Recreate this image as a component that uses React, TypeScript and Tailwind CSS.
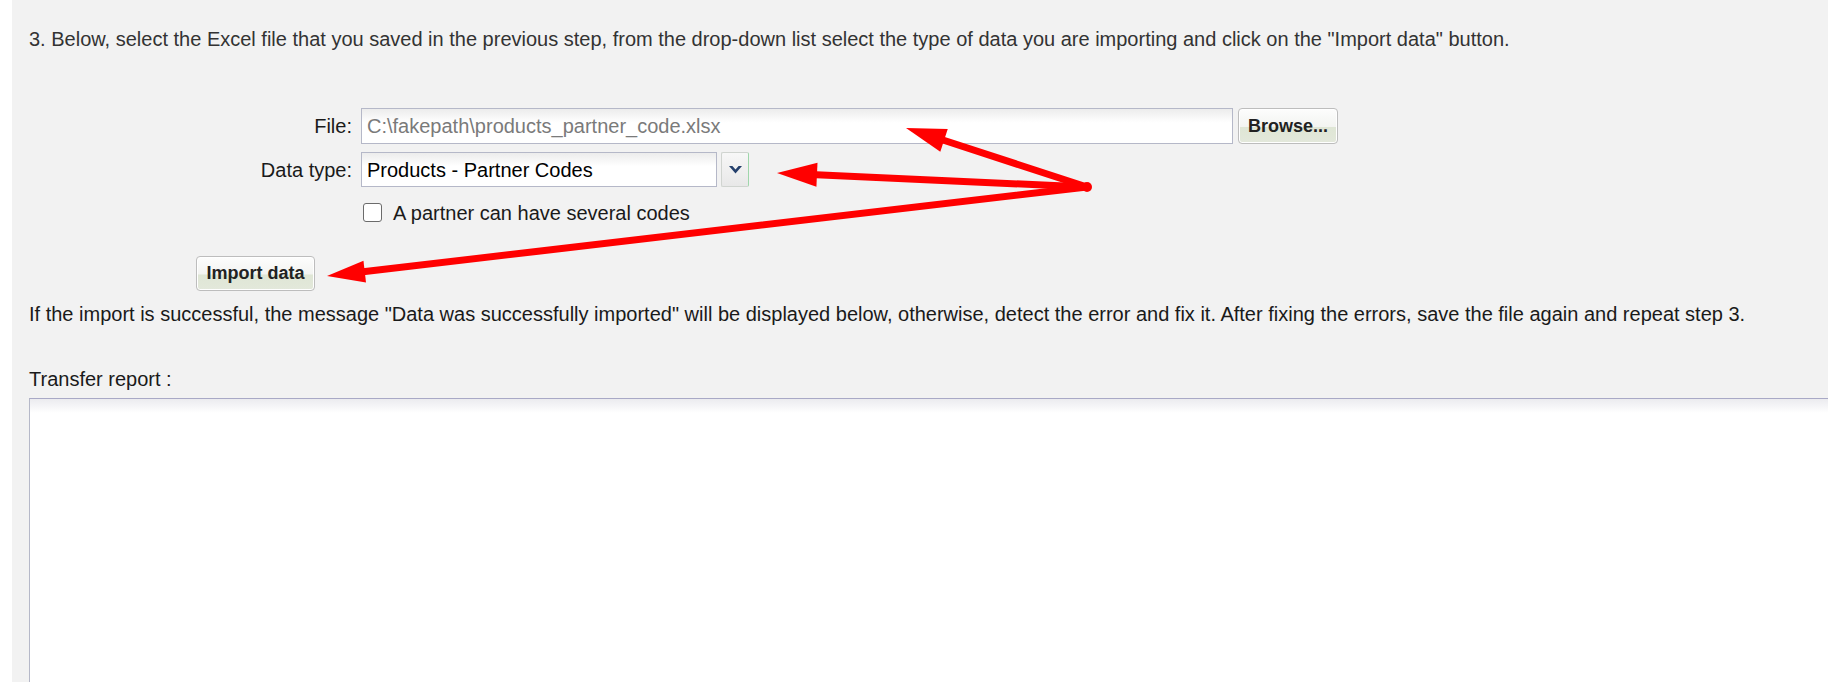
import React from 'react';

type Pt = { x: number; y: number };

const ORIGIN: Pt = { x: 1087, y: 187 };

const arrows: { tip: Pt; len: number; half: number }[] = [
  { tip: { x: 906, y: 128 }, len: 40, half: 12 },
  { tip: { x: 777, y: 173 }, len: 40, half: 12 },
  { tip: { x: 327, y: 276 }, len: 38, half: 11 },
];

const RedArrow: React.FC<{ tip: Pt; len: number; half: number }> = ({ tip, len, half }) => {
  const dx = ORIGIN.x - tip.x;
  const dy = ORIGIN.y - tip.y;
  const d = Math.hypot(dx, dy);
  const ux = dx / d;
  const uy = dy / d;
  const bx = tip.x + ux * len;
  const by = tip.y + uy * len;
  const px = -uy * half;
  const py = ux * half;
  const lx = tip.x + ux * (len - 6);
  const ly = tip.y + uy * (len - 6);
  return (
    <g>
      <line x1={ORIGIN.x} y1={ORIGIN.y} x2={lx} y2={ly} stroke="#ff0000" strokeWidth={7} strokeLinecap="round" />
      <polygon points={`${tip.x},${tip.y} ${bx + px},${by + py} ${bx - px},${by - py}`} fill="#ff0000" />
    </g>
  );
};

const ExtButton: React.FC<{ label: string; className?: string }> = ({ label, className = '' }) => (
  <button
    type="button"
    className={`flex items-center justify-center rounded-[4px] border border-[#bdbdbd] bg-[linear-gradient(#fdfdfd,#f3f4f1_52%,#dfe6d5_54%,#e3e8db)] text-[18px] font-bold text-[#222] shadow-[inset_0_0_0_1px_#ffffff] ${className}`}
  >
    {label}
  </button>
);

export default function App() {
  return (
    <div className="relative flex h-[682px] w-full overflow-hidden bg-white font-['Liberation_Sans',Arial,sans-serif]">
      <div className="w-[12px] shrink-0 bg-white" />
      <div className="flex min-w-0 flex-1 flex-col bg-[#f2f2f2] pl-[17px] pt-[28px]">
        <p className="text-[20px] leading-[23px] text-[#333]">
          3. Below, select the Excel file that you saved in the previous step, from the drop-down list select the type of data you are importing and click on the "Import data" button.
        </p>

        <div className="mt-[57px] flex flex-col">
          <div className="flex h-[36px] items-center">
            <label className="w-[324px] pr-[1px] text-right text-[20px] text-[#1a1a1a]">File:</label>
            <div className="ml-[8px] flex h-[36px] w-[872px] items-center border border-[#b5b8c8] bg-[linear-gradient(#ececec,#ffffff_40%)] pl-[5px] text-[20px] text-[#7a7a7a]">
              C:\fakepath\products_partner_code.xlsx
            </div>
            <ExtButton label="Browse..." className="ml-[5px] h-[36px] w-[100px]" />
          </div>

          <div className="mt-[8px] flex h-[35px] items-center">
            <label className="w-[324px] pr-[1px] text-right text-[20px] text-[#1a1a1a]">Data type:</label>
            <div className="ml-[8px] flex h-[35px] w-[356px] items-center border border-[#b5b8c8] bg-[linear-gradient(#ececec,#ffffff_40%)] pl-[5px] text-[20px] text-black">
              Products - Partner Codes
            </div>
            <div className="ml-[4px] flex h-[35px] w-[28px] items-center justify-center rounded-[2px] border border-[#d0d4d0] border-r-[#9fd6ab] bg-[linear-gradient(#f7f7f7,#e8e8e8)]">
              <svg width="13" height="8" viewBox="0 0 13 8">
                <polygon points="0,0 3.4,0 6.5,3.6 9.6,0 13,0 6.5,7.5" fill="#24406c" />
              </svg>
            </div>
          </div>

          <div className="mt-[16px] flex h-[19px] items-center">
            <div className="ml-[334px] h-[19px] w-[19px] rounded-[3px] border-[1.5px] border-[#6b6b6b] bg-white" />
            <span className="ml-[11px] text-[20px] leading-none text-[#1a1a1a]">A partner can have several codes</span>
          </div>

          <ExtButton label="Import data" className="ml-[167px] mt-[34px] h-[35px] w-[119px]" />
        </div>

        <p className="mt-[12px] text-[20px] leading-[23px] text-[#1a1a1a]">
          If the import is successful, the message "Data was successfully imported" will be displayed below, otherwise, detect the error and fix it. After fixing the errors, save the file again and repeat step 3.
        </p>

        <p className="mt-[42px] text-[20px] leading-[23px] text-[#1a1a1a]">Transfer report :</p>

        <textarea
          readOnly
          className="mb-[-20px] mt-[7px] w-[calc(100%+20px)] flex-1 resize-none border border-[#b5b8c8] border-t-[#a9a9c6] bg-[linear-gradient(#ebebef,#ffffff_14px)] outline-none"
        />
      </div>

      <svg className="pointer-events-none absolute inset-0" width="1828" height="682" viewBox="0 0 1828 682">
        {arrows.map((a, i) => (
          <RedArrow key={i} {...a} />
        ))}
        <circle cx={ORIGIN.x} cy={ORIGIN.y} r={5} fill="#ff0000" />
      </svg>
    </div>
  );
}
